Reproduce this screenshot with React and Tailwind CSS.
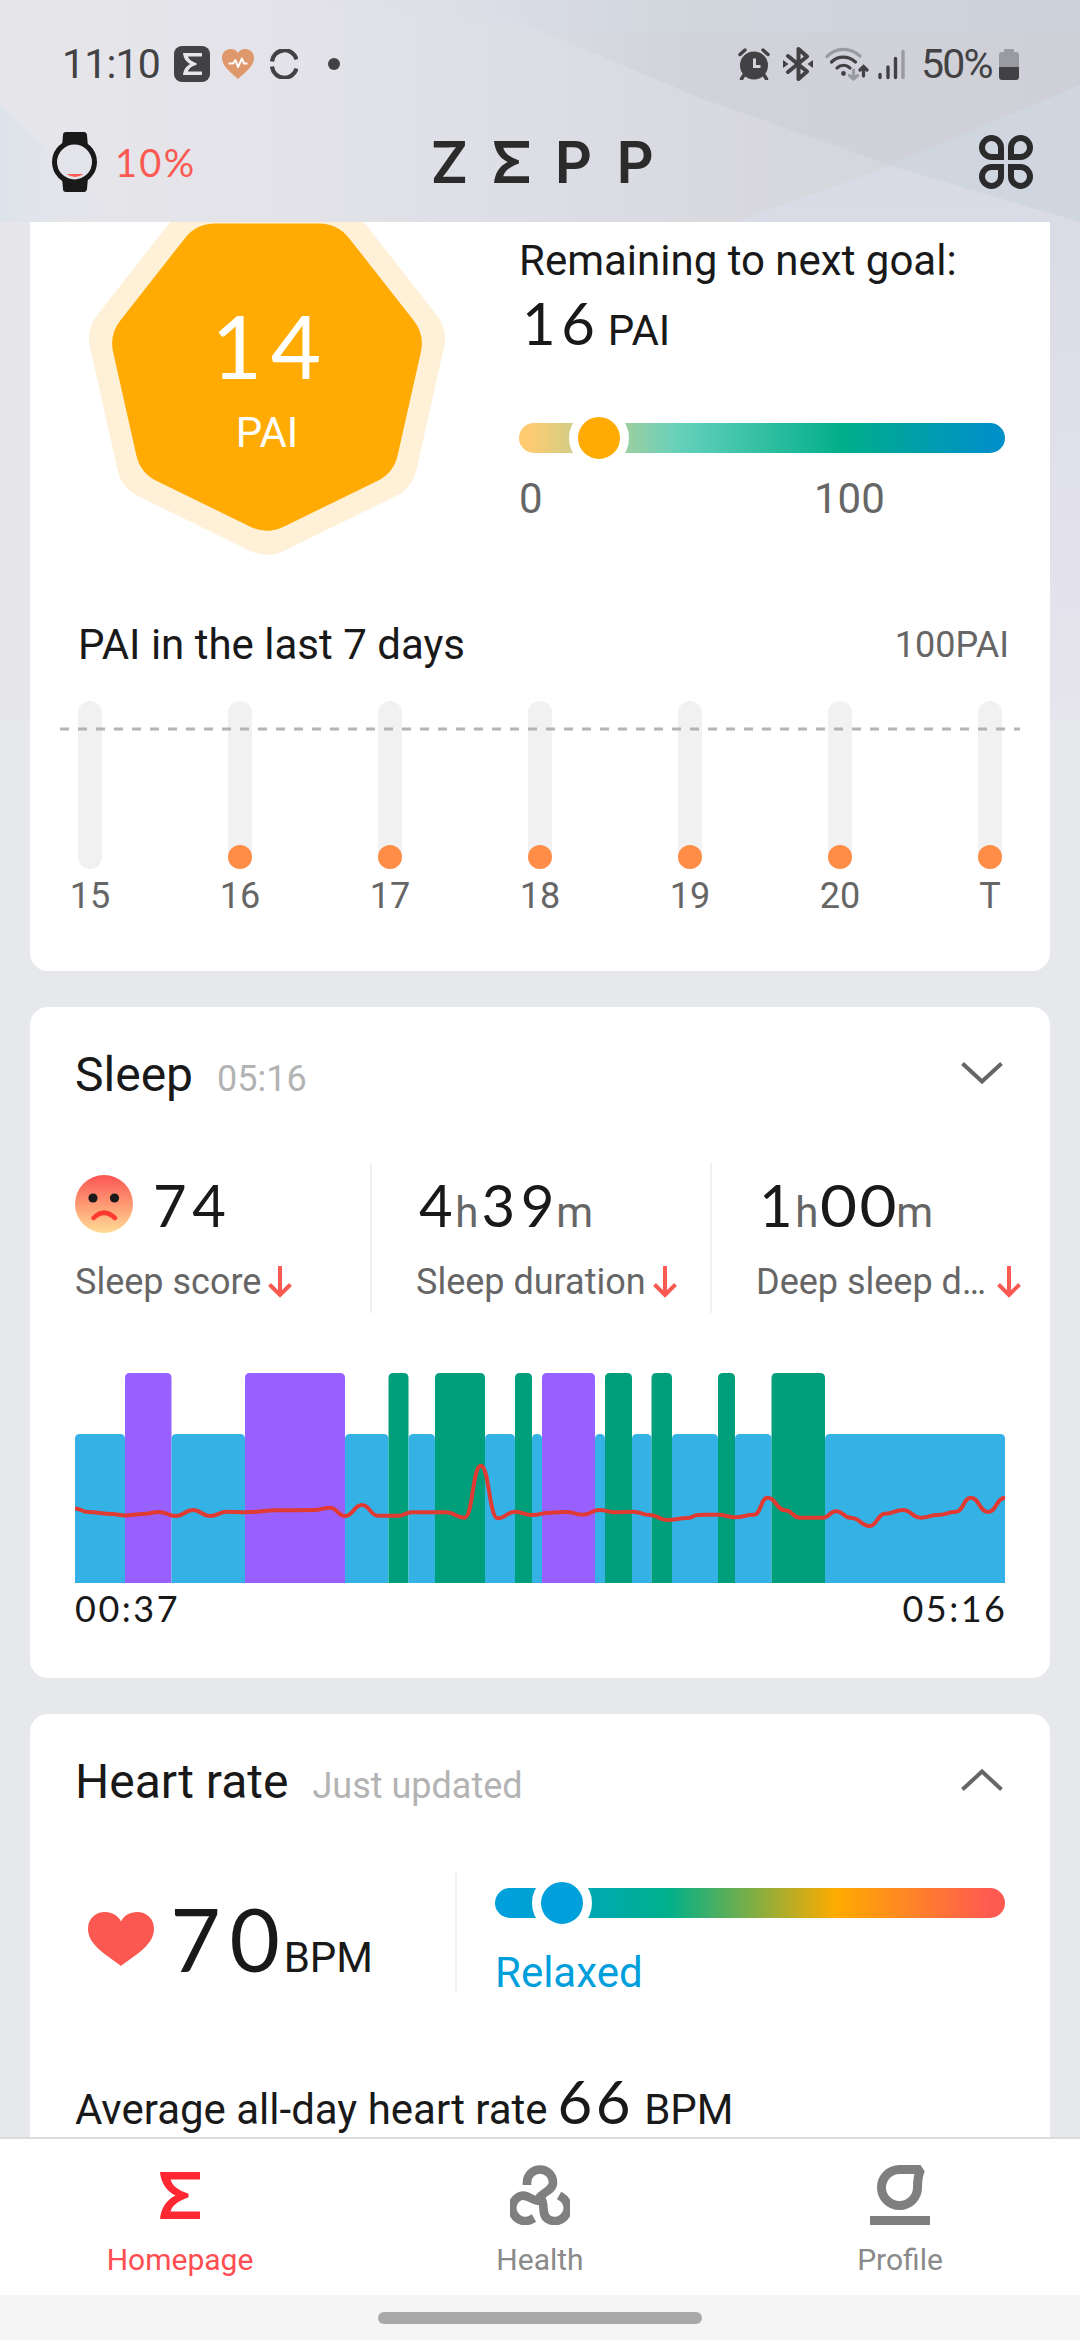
const PAI_DAYS = [
  { label: "15", value: 0 },
  { label: "16", value: 14 },
  { label: "17", value: 14 },
  { label: "18", value: 14 },
  { label: "19", value: 14 },
  { label: "20", value: 14 },
  { label: "T", value: 14 },
];

const STAGE_COLORS = { light: "#34b2e6", deep: "#009f7b", rem: "#9860ff" };

// [start, end, stage]
const SLEEP_STAGES = [
  [0, 50, "light"],
  [50, 96.5, "rem"],
  [96.5, 170, "light"],
  [170, 270, "rem"],
  [270, 313.5, "light"],
  [313.5, 333.5, "deep"],
  [333.5, 360, "light"],
  [360, 410, "deep"],
  [410, 440, "light"],
  [440, 457, "deep"],
  [457, 467, "light"],
  [467, 520, "rem"],
  [520, 530, "light"],
  [530, 557, "deep"],
  [557, 576.5, "light"],
  [576.5, 597, "deep"],
  [597, 643, "light"],
  [643, 660, "deep"],
  [660, 696.5, "light"],
  [696.5, 750, "deep"],
  [750, 930, "light"],
];

const HEART_LINE = [
  [0, 135.5], [13, 139], [37, 141], [50, 142.5], [68, 141], [84, 139], [101, 143], [118, 137], [135, 143],
  [152, 138.7], [170, 139.3], [203, 137.3], [239, 137], [255, 134.7], [270, 143], [287, 132], [303, 142.7],
  [323, 142.7], [337, 139.3], [371, 139.3], [389.6, 144.7], [405.8, 92.7], [422.6, 145.3], [440, 138.7],
  [457, 142], [475, 139.7], [491, 139], [508, 141.7], [524, 137], [541, 139.3], [558, 138.7], [575, 142],
  [592, 147], [613, 145], [623, 142], [643, 141.7], [660, 144.3], [679, 141.7], [692.6, 124.7], [710, 137.3],
  [725, 144.7], [748, 144.7], [761, 138.3], [776.6, 145], [794.5, 153], [810, 140.7], [828, 137],
  [845.5, 144.7], [863, 142], [881, 138.7], [895.8, 124.7], [913, 139], [930, 124.7],
];

function smoothPath(points) {
  return points.reduce((d, [x, y], i) => {
    if (i === 0) return `M${x} ${y}`;
    const [px, py] = points[i - 1];
    const mid = (px + x) / 2;
    return `${d} C${mid} ${py} ${mid} ${y} ${x} ${y}`;
  }, "");
}

function heptagon(cx, cy, r) {
  return Array.from({ length: 7 }, (_, i) => {
    const a = (i * 2 * Math.PI) / 7;
    return `${(cx + 0.985 * r * Math.sin(a)).toFixed(1)},${(cy + r * Math.cos(a)).toFixed(1)}`;
  }).join(" ");
}

function Digits({ children, className = "", spacing = "pl-[0.05em] tracking-[0.1em]" }) {
  return <span className={`inline-block font-[Lato,sans-serif] ${spacing} ${className}`}>{children}</span>;
}

function SigmaLogo({ className }) {
  return (
    <svg viewBox="0 0 40 47" preserveAspectRatio="none" className={className} fill="currentColor">
      <path d="M0 0H40V7.5H10.5C12.5 14 18 18 28.500 21.800V25.200C18 29 12.500 33 10.500 39.500H40V47H0C1 36 6.500 28 15.500 23.500C6.500 19 1 11 0 0Z" />
    </svg>
  );
}

function Backdrop() {
  return (
    <svg className="absolute inset-0 -z-10" width="1080" height="720" viewBox="0 0 1080 720" preserveAspectRatio="none">
      <defs>
        <linearGradient id="sky" x1="0" y1="0" x2="1" y2="0">
          <stop offset="0" stopColor="#e6e6eb" />
          <stop offset="0.25" stopColor="#e3e3e9" />
          <stop offset="0.5" stopColor="#dddde6" />
          <stop offset="0.75" stopColor="#d6d7dc" />
          <stop offset="1" stopColor="#d4d7e1" />
        </linearGradient>
        <linearGradient id="fold" x1="0" y1="0" x2="1" y2="0">
          <stop offset="0" stopColor="#d4d6de" stopOpacity="0" />
          <stop offset="0.35" stopColor="#d2d3da" />
          <stop offset="1" stopColor="#cecfd7" />
        </linearGradient>
        <linearGradient id="rise" x1="0" y1="0" x2="0" y2="1">
          <stop offset="0" stopColor="#d8dae5" />
          <stop offset="0.5" stopColor="#e0e0ea" />
          <stop offset="1" stopColor="#e6e5ee" />
        </linearGradient>
        <linearGradient id="haze" x1="0" y1="0" x2="1" y2="0">
          <stop offset="0" stopColor="#d5dfe8" stopOpacity="0" />
          <stop offset="0.6" stopColor="#cfdbe2" stopOpacity="0.4" />
          <stop offset="1" stopColor="#cbd2dc" stopOpacity="0.6" />
        </linearGradient>
        <linearGradient id="corner" x1="0" y1="0" x2="1" y2="0">
          <stop offset="0" stopColor="#dde3ea" />
          <stop offset="1" stopColor="#e3e5ea" stopOpacity="0" />
        </linearGradient>
      </defs>
      <rect width="1080" height="720" fill="url(#sky)" />
      <path d="M480 0H1080V92L890 165L700 98L480 5Z" fill="url(#fold)" />
      <path d="M280 0H1080V32H560Z" fill="url(#haze)" />
      <path d="M1080 85V222L890 165Z" fill="#d0d6e0" />
      <path d="M890 166L1080 222V720H1040V222H735Z" fill="url(#rise)" />
      <path d="M0 105L120 222H0Z" fill="url(#corner)" />
    </svg>
  );
}

function StatusBar() {
  return (
    <div className="mt-7 flex h-[72px] items-center pr-[61px] pl-[62px] text-[#424244]">
      <span className="w-[112px] text-[41px] leading-none tracking-[-0.8px]">11:10</span>
      <span className="flex size-9 items-center justify-center rounded-[8px] bg-[#424244] text-[#e6e6ea]">
        <SigmaLogo className="h-[22px] w-[19px]" />
      </span>
      <svg className="ml-3" width="32" height="30" viewBox="0 0 32 30">
        <path d="M16 30C11 25 0 18 0 9C0 3.500 4 0 8.500 0C12 0 14.500 1.500 16 4C17.500 1.500 20 0 23.500 0C28 0 32 3.500 32 9C32 18 21 25 16 30Z" fill="#df976c" />
        <path d="M6.500 14.500H11L13.500 11L16 18L20 9.500L22 14.500H25.500" fill="none" stroke="#fff" strokeWidth="2" strokeLinejoin="round" />
      </svg>
      <svg className="ml-4" width="28" height="30" viewBox="0 0 28 30" fill="none" stroke="currentColor" strokeWidth="4.200">
        <path d="M2 12.500A12.500 12.500 0 0 1 26.500 10.500" />
        <path d="M2 17.500A12.500 12.500 0 0 0 26.500 19.500" />
      </svg>
      <span className="ml-[30px] size-3 rounded-full bg-[#424244]" />

      <svg className="ml-auto" width="32" height="32" viewBox="0 0 32 32">
        <circle cx="16" cy="17.500" r="14" fill="currentColor" />
        <path d="M2 6.500L7 2M30 6.500L25 2M6 27L3.500 31M26 27L28.500 31" stroke="currentColor" strokeWidth="3.400" strokeLinecap="round" />
        <path d="M16.500 10.500V18.500H22.500" fill="none" stroke="#d3d4da" strokeWidth="3" />
      </svg>
      <svg className="ml-[13px]" width="30" height="34" viewBox="0 0 30 34">
        <path d="M5 9L24 24.500L15.500 32V2L24 9.500L5 25" fill="none" stroke="currentColor" strokeWidth="4" strokeLinejoin="round" strokeLinecap="round" />
        <path d="M0 13L5.500 17L0 21ZM30 13L24.500 17L30 21Z" fill="currentColor" />
      </svg>
      <svg className="ml-[12px]" width="44" height="34" viewBox="0 0 44 34" fill="none" strokeWidth="3.200" strokeLinecap="round">
        <path d="M2 9.500C11 0 25 0 35 9" stroke="#9a9ba0" />
        <path d="M6.500 15C13 8.500 23 8.500 30.500 15M12 21C16 17.500 21 17.500 25 21" stroke="currentColor" />
        <circle cx="18.500" cy="26.500" r="2.400" fill="currentColor" />
        <path d="M28.500 23V32M24.500 28.500L28.500 32L32.500 28.500" stroke="#9a9ba0" />
        <path d="M38.500 29V20M35 23L38.500 19.500L42 23" stroke="currentColor" />
      </svg>
      <svg className="ml-[9px]" width="28" height="32" viewBox="0 0 28 32" strokeWidth="3.400" strokeLinecap="round">
        <path d="M2 26.500V29.500M10 19V29.500M17.500 10.500V29.500" stroke="currentColor" />
        <path d="M25 3.500V29.500" stroke="#9a9ba0" />
      </svg>
      <span className="ml-[15px] w-[73px] text-[41px] leading-none tracking-[-1.8px]">50%</span>
      <svg className="ml-[5px]" width="20" height="31" viewBox="0 0 20 31">
        <path d="M5 1Q5 0 6 0H14Q15 0 15 1V3H17Q20 3 20 6V18H0V6Q0 3 3 3H5Z" fill="#9a9ba0" />
        <path d="M0 18H20V27.500Q20 31 17 31H3Q0 31 0 27.500Z" fill="currentColor" />
      </svg>
    </div>
  );
}

function TitleBar() {
  return (
    <div className="mt-[10px] grid h-[104px] grid-cols-[1fr_220px_1fr] items-center pr-[47px] pl-[52px]">
      <div className="flex items-center">
        <svg width="46" height="60" viewBox="0 0 46 60">
          <path d="M11 3Q11 0 14 0H32Q34.500 0 35 3L36 15H10ZM11 57Q11 60 14 60H32Q34.500 60 35 57L36 45H10Z" fill="#191919" />
          <circle cx="22.500" cy="30" r="20" fill="#e3e3ea" stroke="#191919" strokeWidth="5" />
          <path d="M14.500 42H31.500Q23 48 14.500 42Z" fill="#fb5a52" />
        </svg>
        <Digits className="ml-[17px] text-[38px] leading-none text-[#fb5a52]" spacing="tracking-[0.06em]">
          10%
        </Digits>
      </div>
      <div className="flex items-center justify-between font-[Inter,sans-serif] text-[58px] leading-none font-semibold text-[#2b2b2b]">
        <span className="-ml-[2px] w-[38px]">Z</span>
        <SigmaLogo className="h-[42px] w-[35px]" />
        <span className="w-[36px]">P</span>
        <span className="w-[36px]">P</span>
      </div>
      <div className="grid grid-cols-2 gap-1 justify-self-end">
        <span className="size-[25px] rounded-full rounded-br-[4px] border-[6px] border-[#2b2b2b]" />
        <span className="size-[25px] rounded-full rounded-bl-[4px] border-[6px] border-[#2b2b2b]" />
        <span className="size-[25px] rounded-full rounded-tr-[4px] border-[6px] border-[#2b2b2b]" />
        <span className="size-[25px] rounded-full rounded-tl-[4px] border-[6px] border-[#2b2b2b]" />
      </div>
    </div>
  );
}

function PaiCard() {
  return (
    <section className="h-[749px] shrink-0 rounded-b-[18px] bg-white">
      <div className="flex h-[398px]">
        <div className="grid w-[489px]">
          <svg className="col-start-1 row-start-1" width="474" height="350" viewBox="0 0 474 350" strokeWidth="76" strokeLinejoin="round">
            <polygon points={heptagon(237, 149, 145.8)} fill="#fff1d8" stroke="#fff1d8" />
            <polygon points={heptagon(237, 149, 121.6)} fill="#ffab04" stroke="#ffab04" />
          </svg>
          <div className="col-start-1 row-start-1 flex w-[474px] flex-col items-center pt-[76px] text-white">
            <Digits className="ml-[3px] text-[87px] leading-[96px]">14</Digits>
            <span className="mt-[14px] text-[42px] leading-[50px]">PAI</span>
          </div>
        </div>
        <div className="w-[486px] pt-[14px]">
          <p className="text-[42px] leading-[50px] whitespace-nowrap">Remaining to next goal:</p>
          <p className="mt-[5px] flex h-16 items-baseline text-[42px] leading-none">
            <Digits className="text-[58px] leading-[64px]">16</Digits>
            <span className="ml-[7px]">PAI</span>
          </p>
          <div className="relative mt-[68px] h-[30px] rounded-full bg-[linear-gradient(90deg,#ffcb70_2%,#65d1bb_33%,#00ae8a_67%,#0090c8_97%)]">
            <span className="absolute top-[-15px] left-[50px] size-[60px] rounded-full border-[9px] border-white bg-[#ffab04]" />
          </div>
          <div className="mt-[21px] flex text-[42px] leading-[50px] text-[#666]">
            <span className="w-[295px]">0</span>
            <span>100</span>
          </div>
        </div>
      </div>

      <div className="flex items-center justify-between pr-[41px] pl-12">
        <h3 className="text-[42px] leading-[50px]">PAI in the last 7 days</h3>
        <span className="text-[36px] leading-[50px] text-[#666]">100PAI</span>
      </div>
      <div className="relative mx-[30px] mt-[31px] flex justify-between px-[18px]">
        {PAI_DAYS.map(({ label, value }) => (
          <div key={label} className="flex w-6 flex-col items-center">
            <div className="flex h-[168px] w-6 items-end rounded-full bg-[#f1f1f1]">
              {value > 0 && <span className="size-6 rounded-full bg-[#ff8d48]" />}
            </div>
            <span className="mt-[6px] text-[36px] leading-[42px] text-[#666]">{label}</span>
          </div>
        ))}
        <svg className="absolute top-[26px] left-0" width="960" height="4">
          <path d="M0 2H960" stroke="#b4b4b4" strokeWidth="3" strokeDasharray="9 9" />
        </svg>
      </div>
    </section>
  );
}

function CardHeader({ title, note, open }) {
  return (
    <div className="flex h-14 items-center pr-[47px] pl-[45px]">
      <div className="flex h-14 items-baseline">
        <h2 className="text-[48px] leading-[56px]">{title}</h2>
        <span className="ml-6 text-[36px] leading-none text-[#b3b3b3]">{note}</span>
      </div>
      <svg className="-mt-1 ml-auto" width="42" height="22" viewBox="0 0 42 22" fill="none" stroke="#666" strokeWidth="4">
        <path d={open ? "M1.500 20.500L21 2.500L40.500 20.500" : "M1.500 1.500L21 19.500L40.500 1.500"} />
      </svg>
    </div>
  );
}

function DownArrow() {
  return (
    <svg className="ml-[7px]" width="24" height="32" viewBox="0 0 24 32" fill="none" stroke="#fb5a52" strokeWidth="4">
      <path d="M12 0V29M1.500 18.500L12 29L22.500 18.500" />
    </svg>
  );
}

function Stat({ label, children, className, labelClassName = "" }) {
  return (
    <div className={`pt-[10px] ${className}`}>
      <div className="flex h-16 items-baseline text-[42px] leading-none text-[#666]">{children}</div>
      <div className="mt-6 flex items-center text-[36px] leading-[42px] whitespace-nowrap text-[#666]">
        <span className={labelClassName}>{label}</span>
        <DownArrow />
      </div>
    </div>
  );
}

function SadFace() {
  return (
    <svg className="mr-[17px] self-start" width="58" height="60" viewBox="0 0 58 60">
      <defs>
        <linearGradient id="face" x1="0" y1="0" x2="0" y2="1">
          <stop offset="0" stopColor="#fb5552" />
          <stop offset="1" stopColor="#ffdc94" />
        </linearGradient>
      </defs>
      <circle cx="29" cy="31" r="29" fill="url(#face)" />
      <circle cx="18" cy="25" r="4.600" fill="#191919" />
      <circle cx="39.500" cy="25" r="4.600" fill="#191919" />
      <path d="M18.500 45Q29 34.500 40 45" fill="none" stroke="#fb3a2e" strokeWidth="4.500" strokeLinecap="round" />
    </svg>
  );
}

function SleepChart() {
  return (
    <svg className="mx-[45px] mt-[60px]" width="930" height="210" viewBox="0 0 930 210">
      {SLEEP_STAGES.map(([x0, x1, stage]) => {
        const top = stage === "light" ? 61 : 0;
        const r = 5;
        return (
          <path
            key={x0}
            d={`M${x0} 210V${top + r}Q${x0} ${top} ${x0 + r} ${top}H${x1 - r}Q${x1} ${top} ${x1} ${top + r}V210Z`}
            fill={STAGE_COLORS[stage]}
          />
        );
      })}
      <path d={smoothPath(HEART_LINE)} fill="none" stroke="#e03a32" strokeWidth="4" />
    </svg>
  );
}

function SleepCard() {
  return (
    <section className="mt-9 h-[671px] shrink-0 rounded-[18px] bg-white pt-10">
      <CardHeader title="Sleep" note="05:16" />
      <div className="mt-[60px] flex h-[150px] pl-[45px]">
        <Stat label="Sleep score" className="w-[295px]">
          <SadFace />
          <Digits className="text-[58px] leading-[64px] text-[#191919]">74</Digits>
        </Stat>
        <Stat label="Sleep duration" className="w-[340px] border-l-2 border-[#f0f0f0] pl-[44px]">
          <Digits className="text-[58px] leading-[64px] text-[#191919]">4</Digits>
          <span className="-ml-[3px]">h</span>
          <Digits className="text-[58px] leading-[64px] text-[#191919]">39</Digits>
          <span className="-ml-[4px]">m</span>
        </Stat>
        <Stat
          label="Deep sleep d…"
          className="border-l-2 border-[#f0f0f0] pl-[44px]"
          labelClassName="w-[234px]"
        >
          <Digits className="text-[58px] leading-[64px] text-[#191919]">1</Digits>
          <span className="-ml-[3px]">h</span>
          <Digits
            className="mr-[0.154em] ml-[0.02em] origin-left scale-x-110 text-[58px] leading-[64px] text-[#191919]"
            spacing="tracking-[0.038em]"
          >
            00
          </Digits>
          <span className="-ml-[4px]">m</span>
        </Stat>
      </div>
      <SleepChart />
      <div className="mt-1 flex justify-between px-[45px] text-[36px] leading-[42px]">
        <Digits spacing="tracking-[0.07em]">00:37</Digits>
        <Digits spacing="-mr-[0.07em] tracking-[0.07em]">05:16</Digits>
      </div>
    </section>
  );
}

function HeartCard() {
  return (
    <section className="mt-9 h-[600px] shrink-0 rounded-[18px] bg-white pt-10">
      <CardHeader title="Heart rate" note="Just updated" open />
      <div className="mt-[63px] flex h-[120px] pl-[45px]">
        <div className="flex w-[380px] items-baseline pt-[18px] pl-[13px] text-[42px] leading-none">
          <svg className="mt-[21px] mr-[12px] self-start" width="66" height="54" viewBox="0 0 66 54">
            <path d="M33 54C22 45 0 34 0 17C0 6 8 0 17 0C24 0 30 3.500 33 9.500C36 3.500 42 0 49 0C58 0 66 6 66 17C66 34 44 45 33 54Z" fill="#fb5852" />
          </svg>
          <Digits className="text-[87px] leading-[96px]">70</Digits>
          <span className="-ml-[5px]">BPM</span>
        </div>
        <div className="w-[552px] border-l-2 border-[#f0f0f0] pt-[15px] pl-[38px]">
          <div className="relative h-[30px] w-[510px] rounded-full bg-[linear-gradient(90deg,#00a0dc_3%,#00b08b_34%,#ffab00_67%,#ff5a50_97%)]">
            <span className="absolute top-[-15px] left-[37px] size-[60px] rounded-full border-[9px] border-white bg-[#00a0dc]" />
          </div>
          <p className="mt-[30px] text-[42px] leading-[50px] text-[#009fdc]">Relaxed</p>
        </div>
      </div>
      <p className="mt-[76px] flex h-16 items-baseline pl-[45px] text-[42px] leading-none">
        Average all-day heart rate
        <Digits className="ml-[8px] text-[60px] leading-[64px]" spacing="pl-[0.03em] tracking-[0.06em]">
          66
        </Digits>
        <span className="ml-[10px]">BPM</span>
      </p>
    </section>
  );
}

function HealthIcon() {
  const arm = "M17 20V17.500A13 13 0 0 1 43 17.500C43 26 32 27 28.500 34";
  return (
    <svg width="60" height="60" viewBox="0 0 60 60" fill="none" stroke="currentColor" strokeWidth="8.600">
      <path d={arm} />
      <path d={arm} transform="rotate(120 30 34.500)" />
      <path d={arm} transform="rotate(240 30 34.500)" />
    </svg>
  );
}

function ProfileIcon() {
  return (
    <svg width="60" height="60" viewBox="0 0 60 60">
      <path
        d="M29.500 4.500H50.500Q47.500 12 47.500 22.500A18 18 0 0 1 11.500 22.500A18 18 0 0 1 29.500 4.500Z"
        fill="none"
        stroke="currentColor"
        strokeWidth="9"
        strokeLinejoin="bevel"
      />
      <rect y="51" width="60" height="9" fill="currentColor" />
    </svg>
  );
}

function NavItem({ label, icon, className = "text-[#7f7f7f]", labelClassName = "text-[#8a8a8a]" }) {
  return (
    <div className={`flex flex-1 flex-col items-center pt-[26px] ${className}`}>
      <div className="flex h-[60px] items-center">{icon}</div>
      <span className={`mt-[17px] text-[30px] leading-[36px] ${labelClassName}`}>{label}</span>
    </div>
  );
}

export default function App() {
  return (
    <div className="relative isolate flex h-[2340px] w-[1080px] flex-col overflow-hidden bg-[#e6e8ec] font-[Roboto,sans-serif] text-[#191919]">
      <Backdrop />
      <header className="h-[222px] shrink-0 overflow-hidden">
        <StatusBar />
        <TitleBar />
      </header>

      <main className="flex h-[1915px] shrink-0 flex-col overflow-hidden px-[30px]">
        <PaiCard />
        <SleepCard />
        <HeartCard />
      </main>

      <nav className="flex h-[158px] shrink-0 border-t-2 border-[#dcdce0] bg-white">
        <NavItem
          label="Homepage"
          icon={<SigmaLogo className="h-[47px] w-10" />}
          className="text-[#ff2832]"
          labelClassName="text-[#ff4d52]"
        />
        <NavItem label="Health" icon={<HealthIcon />} />
        <NavItem label="Profile" icon={<ProfileIcon />} />
      </nav>
      <div className="flex flex-1 items-start justify-center bg-[#f5f5f5] pt-[17px]">
        <span className="h-3 w-[324px] rounded-full bg-[#a8a8a8]" />
      </div>
    </div>
  );
}
